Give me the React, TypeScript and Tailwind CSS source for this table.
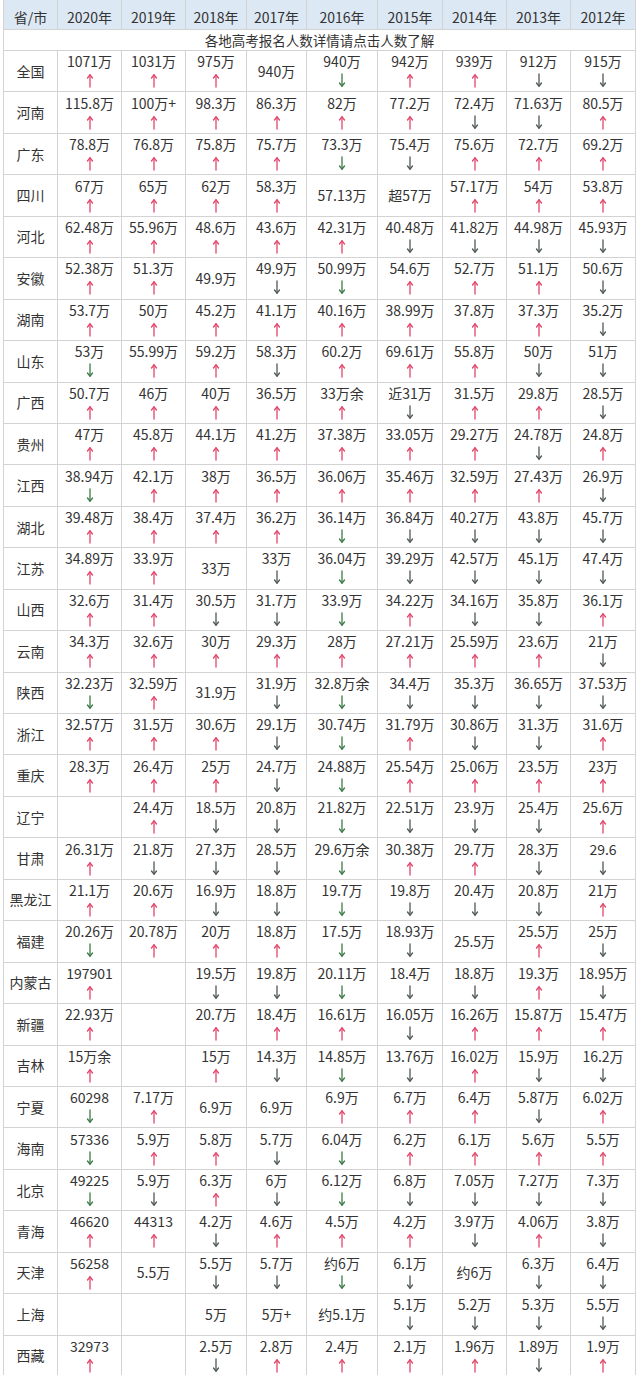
const years = ["2020年", "2019年", "2018年", "2017年", "2016年", "2015年", "2014年", "2013年", "2012年"];

// "^" = 上升, "_" = 下降, 无后缀 = 无箭头
const rows: [string, ...string[]][] = [
  ["全国", "1071万^", "1031万^", "975万^", "940万", "940万_", "942万^", "939万^", "912万_", "915万_"],
  ["河南", "115.8万^", "100万+^", "98.3万^", "86.3万^", "82万^", "77.2万^", "72.4万_", "71.63万_", "80.5万^"],
  ["广东", "78.8万^", "76.8万^", "75.8万^", "75.7万^", "73.3万_", "75.4万_", "75.6万^", "72.7万^", "69.2万^"],
  ["四川", "67万^", "65万^", "62万^", "58.3万^", "57.13万", "超57万", "57.17万^", "54万^", "53.8万^"],
  ["河北", "62.48万^", "55.96万^", "48.6万^", "43.6万^", "42.31万^", "40.48万_", "41.82万_", "44.98万_", "45.93万_"],
  ["安徽", "52.38万^", "51.3万^", "49.9万", "49.9万_", "50.99万_", "54.6万^", "52.7万^", "51.1万^", "50.6万_"],
  ["湖南", "53.7万^", "50万^", "45.2万^", "41.1万^", "40.16万^", "38.99万^", "37.8万^", "37.3万^", "35.2万_"],
  ["山东", "53万_", "55.99万^", "59.2万^", "58.3万_", "60.2万^", "69.61万^", "55.8万^", "50万_", "51万_"],
  ["广西", "50.7万^", "46万^", "40万^", "36.5万^", "33万余^", "近31万_", "31.5万^", "29.8万^", "28.5万_"],
  ["贵州", "47万^", "45.8万^", "44.1万^", "41.2万^", "37.38万^", "33.05万^", "29.27万^", "24.78万_", "24.8万^"],
  ["江西", "38.94万_", "42.1万^", "38万^", "36.5万^", "36.06万^", "35.46万^", "32.59万^", "27.43万^", "26.9万_"],
  ["湖北", "39.48万^", "38.4万^", "37.4万^", "36.2万^", "36.14万_", "36.84万_", "40.27万_", "43.8万_", "45.7万_"],
  ["江苏", "34.89万^", "33.9万^", "33万", "33万_", "36.04万_", "39.29万_", "42.57万_", "45.1万_", "47.4万_"],
  ["山西", "32.6万^", "31.4万^", "30.5万_", "31.7万_", "33.9万_", "34.22万^", "34.16万_", "35.8万_", "36.1万^"],
  ["云南", "34.3万^", "32.6万^", "30万^", "29.3万^", "28万^", "27.21万^", "25.59万^", "23.6万^", "21万_"],
  ["陕西", "32.23万_", "32.59万^", "31.9万", "31.9万_", "32.8万余_", "34.4万_", "35.3万_", "36.65万_", "37.53万_"],
  ["浙江", "32.57万^", "31.5万^", "30.6万^", "29.1万_", "30.74万_", "31.79万^", "30.86万_", "31.3万_", "31.6万^"],
  ["重庆", "28.3万^", "26.4万^", "25万^", "24.7万_", "24.88万_", "25.54万^", "25.06万^", "23.5万^", "23万^"],
  ["辽宁", "", "24.4万^", "18.5万_", "20.8万_", "21.82万_", "22.51万_", "23.9万_", "25.4万_", "25.6万^"],
  ["甘肃", "26.31万^", "21.8万_", "27.3万_", "28.5万_", "29.6万余_", "30.38万^", "29.7万^", "28.3万_", "29.6_"],
  ["黑龙江", "21.1万^", "20.6万^", "16.9万_", "18.8万_", "19.7万_", "19.8万_", "20.4万_", "20.8万_", "21万^"],
  ["福建", "20.26万_", "20.78万^", "20万^", "18.8万^", "17.5万_", "18.93万_", "25.5万", "25.5万^", "25万_"],
  ["内蒙古", "197901^", "", "19.5万_", "19.8万_", "20.11万_", "18.4万_", "18.8万_", "19.3万^", "18.95万_"],
  ["新疆", "22.93万^", "", "20.7万^", "18.4万^", "16.61万^", "16.05万_", "16.26万^", "15.87万^", "15.47万^"],
  ["吉林", "15万余^", "", "15万^", "14.3万_", "14.85万_", "13.76万_", "16.02万^", "15.9万_", "16.2万_"],
  ["宁夏", "60298_", "7.17万^", "6.9万", "6.9万", "6.9万^", "6.7万^", "6.4万^", "5.87万_", "6.02万^"],
  ["海南", "57336_", "5.9万^", "5.8万^", "5.7万_", "6.04万_", "6.2万^", "6.1万^", "5.6万^", "5.5万^"],
  ["北京", "49225_", "5.9万_", "6.3万^", "6万_", "6.12万_", "6.8万_", "7.05万_", "7.27万_", "7.3万_"],
  ["青海", "46620^", "44313^", "4.2万_", "4.6万^", "4.5万^", "4.2万^", "3.97万_", "4.06万^", "3.8万_"],
  ["天津", "56258^", "5.5万", "5.5万_", "5.7万_", "约6万_", "6.1万_", "约6万", "6.3万_", "6.4万_"],
  ["上海", "", "", "5万", "5万+", "约5.1万", "5.1万_", "5.2万_", "5.3万_", "5.5万_"],
  ["西藏", "32973^", "", "2.5万_", "2.8万^", "2.4万^", "2.1万^", "1.96万^", "1.89万_", "1.9万^"],
];

function Arrow({ up, green }: { up: boolean; green: boolean }) {
  const color = up ? "#e2456a" : green ? "#3b7a48" : "#4f5a52";
  return (
    <svg width="8" height="15" viewBox="0 0 8 15" fill="none" stroke={color} strokeWidth="1.3" strokeLinecap="round">
      {up ? (
        <>
          <path d="M4 2v12" />
          <path d="M1.5 5L4 1.8 6.5 5" />
        </>
      ) : (
        <>
          <path d="M4 1v12" />
          <path d="M1.5 10L4 13.2 6.5 10" />
        </>
      )}
    </svg>
  );
}

function Cell({ raw, col }: { raw: string; col: number }) {
  const last = raw.slice(-1);
  const dir = last === "^" ? "up" : last === "_" ? "down" : null;
  const text = dir ? raw.slice(0, -1) : raw;
  return (
    <div className="bg-white h-[40.45px] flex flex-col items-center justify-center">
      <div className="leading-[19px] whitespace-nowrap">{text}</div>
      {dir && (
        <div className="h-[19px] flex items-center justify-center">
          <Arrow up={dir === "up"} green={col === 0 || col === 4} />
        </div>
      )}
    </div>
  );
}

export default function App() {
  return (
    <div
      className="w-[640px] h-[1375px] overflow-hidden bg-white pl-[3px] text-[14px] text-[#333]"
      style={{ fontFamily: '"Noto Sans CJK SC", "Noto Sans", sans-serif' }}
    >
      <div className="w-[633px] grid grid-cols-[53px_63px_63px_60px_59px_70px_64px_63px_63px_64px] gap-px bg-[#d3d3d3] px-px pb-px">
        <div className="bg-[#dce8f4] h-[29px] flex items-center justify-center pt-[6px]">省/市</div>
        {years.map((y) => (
          <div key={y} className="bg-[#dce8f4] h-[29px] flex items-center justify-center pt-[6px]">
            {y}
          </div>
        ))}
        <div className="col-span-10 bg-white h-[20px] flex items-center justify-center text-[13.5px]">
          各地高考报名人数详情请点击人数了解
        </div>
        {rows.map(([name, ...cells]) => (
          <div key={name} className="contents">
            <div className="bg-white h-[40.45px] flex items-center justify-center whitespace-nowrap">{name}</div>
            {cells.map((c, i) => (
              <Cell key={i} raw={c} col={i} />
            ))}
          </div>
        ))}
      </div>
    </div>
  );
}
